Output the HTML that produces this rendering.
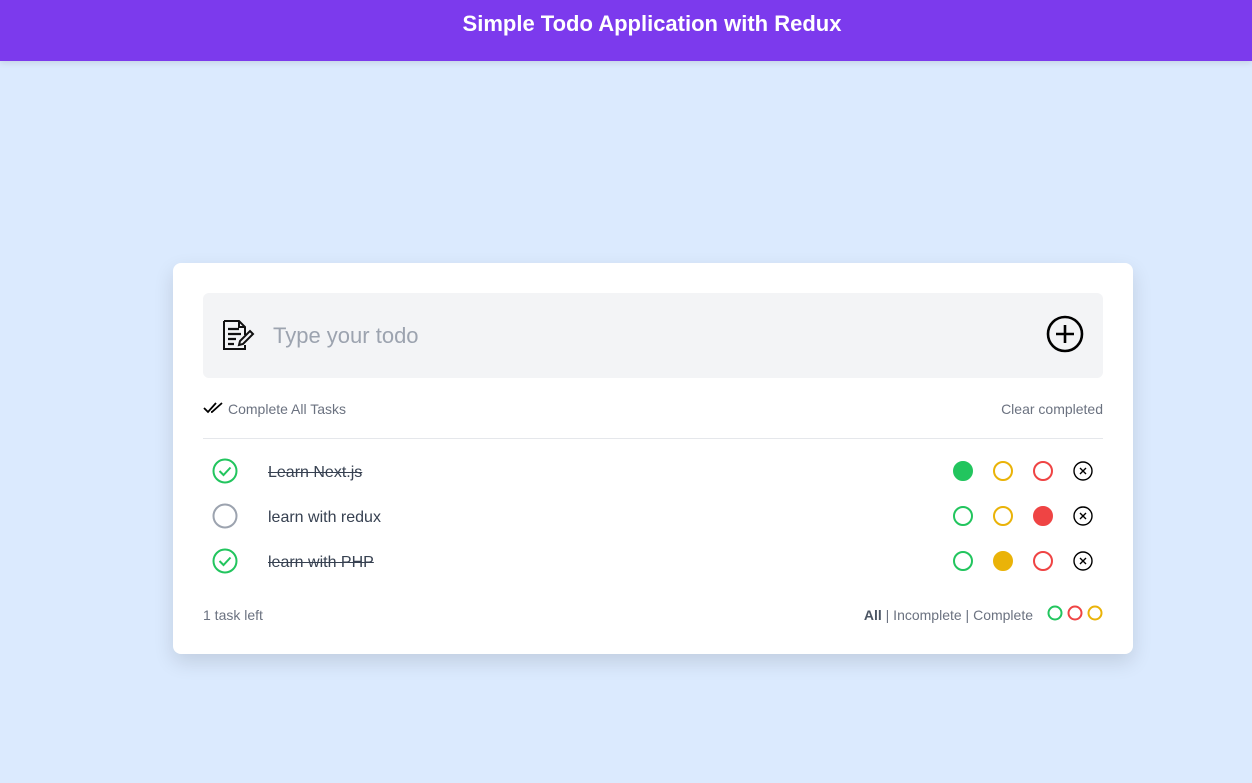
<!DOCTYPE html>
<html><head><meta charset="utf-8"><style>
*{margin:0;padding:0;box-sizing:border-box}
body{width:1252px;height:783px;background:#dbeafe;font-family:"Liberation Sans",sans-serif;position:relative;overflow:hidden}
.hdr{position:absolute;left:0;top:0;width:1252px;height:61px;background:#7c3aed;color:#fff;font-weight:bold;font-size:22px;text-align:center;line-height:48px;padding-left:52px;box-shadow:0 2px 6px rgba(0,0,0,.1)}
.card{position:absolute;left:173px;top:263px;width:960px;height:391px;background:#fff;border-radius:8px;box-shadow:0 8px 20px rgba(0,0,0,.12)}
.inp{position:absolute;left:30px;top:30px;width:900px;height:85px;background:#f3f4f6;border-radius:6px}
.ph{position:absolute;left:70px;top:30px;font-size:22px;color:#9ca3af}
.abs{position:absolute}
.small{font-size:14px;color:#6b7280}
.txt{position:absolute;left:95px;font-size:16px;color:#374151}
.strike{text-decoration:line-through}
.hr{position:absolute;left:30px;top:175px;width:900px;height:1px;background:#e5e7eb}
</style></head><body>
<div class="hdr">Simple Todo Application with Redux</div>
<div class="card">
 <div class="inp">
  <svg class="abs" style="left:18px;top:26px" width="34" height="32" viewBox="0 0 34 32" fill="none" stroke="#111" stroke-width="2">
   <path d="M3 2h15l6 6v8M24 26v4H3V2"/><path d="M18 2v6h6"/>
   <path d="M7 10h11M7 15h13M7 20h8M7 25h6" stroke-width="2.2"/>
   <path d="M29 12l3 3-10 10-4 1 1-4z"/>
  </svg>
  <div class="ph">Type your todo</div>
  <svg class="abs" style="left:843px;top:22px" width="38" height="38" viewBox="0 0 38 38" fill="none" stroke="#000" stroke-width="2.6"><circle cx="19" cy="19" r="17"/><path d="M19 10v18M10 19h18"/></svg>
 </div>
 <svg class="abs" style="left:30px;top:139px" width="22" height="12" viewBox="0 0 22 12" fill="none" stroke="#000" stroke-width="1.8"><path d="M1 6l4 4 8-9M8 10l1 0 10-9"/></svg>
 <div class="abs small" style="left:55px;top:138px">Complete All Tasks</div>
 <div class="abs small" style="right:30px;top:138px">Clear completed</div>
 <div class="hr"></div>

 <svg class="abs" style="left:39px;top:195px" width="26" height="26" viewBox="0 0 26 26" fill="none" stroke="#22c55e" stroke-width="2"><circle cx="13" cy="13" r="11.5"/><path d="M7.5 13l4 4L18.5 9.5"/></svg>
 <div class="txt strike" style="top:201px">Learn Next.js</div>
 <svg class="abs" style="left:39px;top:240px" width="26" height="26" viewBox="0 0 26 26" fill="none" stroke="#9ca3af" stroke-width="2"><circle cx="13" cy="13" r="11.5"/></svg>
 <div class="txt" style="top:246px">learn with redux</div>
 <svg class="abs" style="left:39px;top:285px" width="26" height="26" viewBox="0 0 26 26" fill="none" stroke="#22c55e" stroke-width="2"><circle cx="13" cy="13" r="11.5"/><path d="M7.5 13l4 4L18.5 9.5"/></svg>
 <div class="txt strike" style="top:291px">learn with PHP</div>

 <svg class="abs" style="left:770px;top:195px" width="150" height="120" viewBox="0 0 150 120" stroke-width="2">
  <g transform="translate(0,13)">
   <circle cx="20" cy="0" r="9" fill="#22c55e" stroke="#22c55e"/>
   <circle cx="60" cy="0" r="9" fill="none" stroke="#eab308"/>
   <circle cx="100" cy="0" r="9" fill="none" stroke="#ef4444"/>
  </g>
  <g transform="translate(0,58)">
   <circle cx="20" cy="0" r="9" fill="none" stroke="#22c55e"/>
   <circle cx="60" cy="0" r="9" fill="none" stroke="#eab308"/>
   <circle cx="100" cy="0" r="9" fill="#ef4444" stroke="#ef4444"/>
  </g>
  <g transform="translate(0,103)">
   <circle cx="20" cy="0" r="9" fill="none" stroke="#22c55e"/>
   <circle cx="60" cy="0" r="9" fill="#eab308" stroke="#eab308"/>
   <circle cx="100" cy="0" r="9" fill="none" stroke="#ef4444"/>
  </g>
  <g fill="none" stroke="#000" stroke-width="1.4">
   <circle cx="140" cy="13" r="9"/><path d="M137 10l6 6M143 10l-6 6"/>
   <circle cx="140" cy="58" r="9"/><path d="M137 55l6 6M143 55l-6 6"/>
   <circle cx="140" cy="103" r="9"/><path d="M137 100l6 6M143 100l-6 6"/>
  </g>
 </svg>

 <div class="abs small" style="left:30px;top:344px">1 task left</div>
 <div class="abs small" style="left:675px;top:344px;width:185px;text-align:right"><b style="color:#4b5563">All</b> | Incomplete | Complete</div>
 <svg class="abs" style="left:873px;top:342px" width="60" height="16" viewBox="0 0 60 16" fill="none" stroke-width="2">
  <circle cx="9" cy="8" r="6.5" stroke="#22c55e"/><circle cx="29" cy="8" r="6.5" stroke="#ef4444"/><circle cx="49" cy="8" r="6.5" stroke="#eab308"/>
 </svg>
</div>
</body></html>
